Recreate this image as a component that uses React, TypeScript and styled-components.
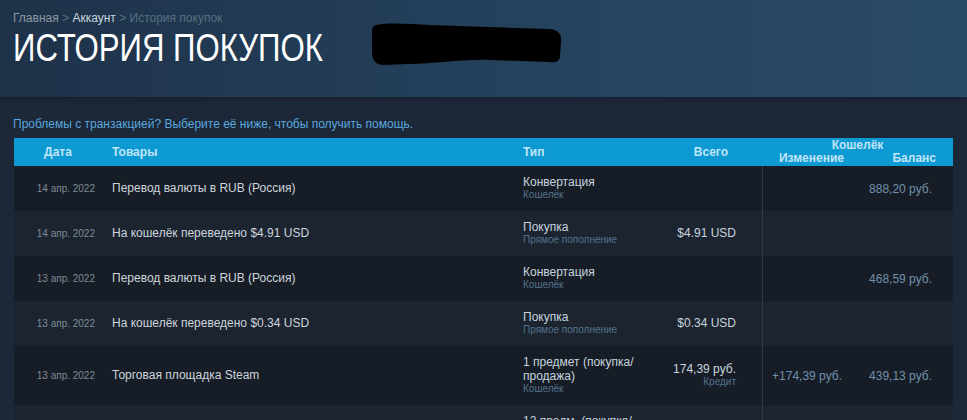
import styled, {createGlobalStyle} from 'styled-components'

type Row = {
  date: string
  item: string
  type: string[]
  typeNote: string
  total?: string
  totalNote?: string
  change?: string
  balance?: string
}

const rows: Row[] = [
  {date: '14 апр. 2022', item: 'Перевод валюты в RUB (Россия)', type: ['Конвертация'], typeNote: 'Кошелёк', balance: '888,20 руб.'},
  {date: '14 апр. 2022', item: 'На кошелёк переведено $4.91 USD', type: ['Покупка'], typeNote: 'Прямое пополнение', total: '$4.91 USD'},
  {date: '13 апр. 2022', item: 'Перевод валюты в RUB (Россия)', type: ['Конвертация'], typeNote: 'Кошелёк', balance: '468,59 руб.'},
  {date: '13 апр. 2022', item: 'На кошелёк переведено $0.34 USD', type: ['Покупка'], typeNote: 'Прямое пополнение', total: '$0.34 USD'},
  {date: '13 апр. 2022', item: 'Торговая площадка Steam', type: ['1 предмет (покупка/', 'продажа)'], typeNote: 'Кошелёк', total: '174,39 руб.', totalNote: 'Кредит', change: '+174,39 руб.', balance: '439,13 руб.'},
  {date: '13 апр. 2022', item: 'Торговая площадка Steam', type: ['12 предм. (покупка/', 'продажа)'], typeNote: 'Кошелёк', total: '2 093,16 руб.', totalNote: 'Кредит', change: '+2 093,16 руб.', balance: '2 532,29 руб.'},
]

export default function App() {
  return (
    <>
      <GlobalStyle />
      <PageHeader>
        <Breadcrumbs>
          <Crumb>Главная</Crumb>
          <CrumbSep> &gt; </CrumbSep>
          <Crumb $active>Аккаунт</Crumb>
          <CrumbSep> &gt; </CrumbSep>
          <CrumbSep>История покупок</CrumbSep>
        </Breadcrumbs>
        <TitleRow>
          <Title>ИСТОРИЯ ПОКУПОК</Title>
          <Redaction width="196" height="48" viewBox="0 0 196 48">
            <path
              d="M8 4 C22 1 42 3 62 4 L180 8 C190 8 194 13 193 21 L192 36 C191 41 186 42 180 41 L122 39 C92 38 70 43 40 43 L15 44 C8 44 4 39 4 31 L4 12 C4 7 5 5 8 4 Z"
              fill="#000"
            />
          </Redaction>
        </TitleRow>
      </PageHeader>
      <Content>
        <HelpLink>Проблемы с транзакцией? Выберите её ниже, чтобы получить помощь.</HelpLink>
        <Table>
          <HeadRow>
            <HeadCell $align="center" $pad="0 10px 0 0">Дата</HeadCell>
            <HeadCell>Товары</HeadCell>
            <HeadCell>Тип</HeadCell>
            <HeadCell $align="right" $pad="0 34px 0 0">Всего</HeadCell>
            <WalletHead>
              <WalletTitle>Кошелёк</WalletTitle>
              <WalletSub $pad="0 13px 0 0">Изменение</WalletSub>
              <WalletSub $pad="0 17px 0 0">Баланс</WalletSub>
            </WalletHead>
          </HeadRow>
          {rows.map((r, i) => (
            <BodyRow key={i} $alt={i % 2 === 1}>
              <DateCell>{r.date}</DateCell>
              <ItemCell>{r.item}</ItemCell>
              <TypeCell>
                {r.type.map(t => (
                  <TypeLine key={t}>{t}</TypeLine>
                ))}
                <Note>{r.typeNote}</Note>
              </TypeCell>
              <TotalCell>
                {r.total && <TotalValue>{r.total}</TotalValue>}
                {r.totalNote && <Note>{r.totalNote}</Note>}
              </TotalCell>
              <WalletCell $divider $pad="15px">{r.change}</WalletCell>
              <WalletCell $pad="21px">{r.balance}</WalletCell>
            </BodyRow>
          ))}
        </Table>
      </Content>
    </>
  )
}

const GlobalStyle = createGlobalStyle`
  body {
    margin: 0;
    background: #1c2738;
    font-family: "Liberation Sans", Arial, sans-serif;
    overflow: hidden;
  }
`

const PageHeader = styled.div`
  height: 97px;
  box-sizing: border-box;
  padding: 11px 13px 0;
  background: linear-gradient(90deg, #1e3249 0%, #25425d 55%, #2b4a68 100%);
  box-shadow: 0 2px 5px rgba(0, 0, 0, 0.2);
`

const Breadcrumbs = styled.div`
  font-size: 12px;
  line-height: 14px;
`

const Crumb = styled.span<{$active?: boolean}>`
  color: ${props => (props.$active ? '#c6d4df' : '#8f98a0')};
`

const CrumbSep = styled.span`
  color: #56707f;
`

const TitleRow = styled.div`
  display: flex;
  align-items: flex-start;
  margin-top: 1px;
`

// the reference title face is condensed; squeeze the Arial-metric font to match
const Title = styled.h1`
  margin: 0 -68px 0 0;
  font-weight: normal;
  font-size: 38px;
  line-height: 44px;
  color: #ffffff;
  transform: scaleX(0.82);
  transform-origin: left center;
  white-space: nowrap;
`

const Redaction = styled.svg`
  flex-shrink: 0;
  margin-left: 45px;
  margin-top: -5px;
`

const Content = styled.div`
  padding: 20px 14px 0;
`

const HelpLink = styled.div`
  margin-left: -1px;
  font-size: 12px;
  line-height: 14px;
  color: #5aa8dc;
  margin-bottom: 7px;
`

const Table = styled.div`
  width: 939px;
`

const columns = '98px 411px 140px 99px 95px 96px'

const HeadRow = styled.div`
  display: grid;
  grid-template-columns: ${columns};
  height: 28px;
  align-items: center;
  background: #0d99d2;
  color: #c1e5f8;
  font-size: 12px;
  font-weight: bold;
`

const HeadCell = styled.div<{$align?: string; $pad?: string}>`
  text-align: ${props => props.$align || 'left'};
  padding: ${props => props.$pad || '0'};
`

const WalletHead = styled.div`
  grid-column: span 2;
  display: grid;
  grid-template-columns: 95px 96px;
  line-height: 13px;
`

const WalletTitle = styled.div`
  grid-column: span 2;
  text-align: center;
`

const WalletSub = styled.div<{$pad: string}>`
  text-align: right;
  padding: ${props => props.$pad};
`

const BodyRow = styled.div<{$alt: boolean}>`
  display: grid;
  grid-template-columns: ${columns};
  min-height: 45px;
  box-sizing: border-box;
  padding: 9px 0 10px;
  align-items: center;
  background: ${props => (props.$alt ? '#1c2430' : '#171d26')};
`

const DateCell = styled.div`
  text-align: right;
  padding-right: 17px;
  font-size: 10px;
  color: #7e8b98;
`

const ItemCell = styled.div`
  font-size: 12px;
  color: #ccd5dc;
`

const TypeCell = styled.div`
  display: flex;
  flex-direction: column;
`

const TypeLine = styled.div`
  font-size: 12px;
  line-height: 14px;
  color: #c6d4df;
`

const Note = styled.div`
  font-size: 10px;
  line-height: 12px;
  color: #53728d;
`

const TotalCell = styled.div`
  text-align: right;
  padding-right: 26px;
  white-space: nowrap;
`

const TotalValue = styled.div`
  font-size: 12px;
  line-height: 14px;
  color: #c6d4df;
`

const WalletCell = styled.div<{$divider?: boolean; $pad: string}>`
  align-self: stretch;
  display: flex;
  align-items: center;
  justify-content: flex-end;
  margin: -9px 0 -10px;
  padding-right: ${props => props.$pad};
  border-left: ${props => (props.$divider ? '1px solid #2e3a47' : 'none')};
  font-size: 12px;
  color: #7190ad;
  white-space: nowrap;
`
